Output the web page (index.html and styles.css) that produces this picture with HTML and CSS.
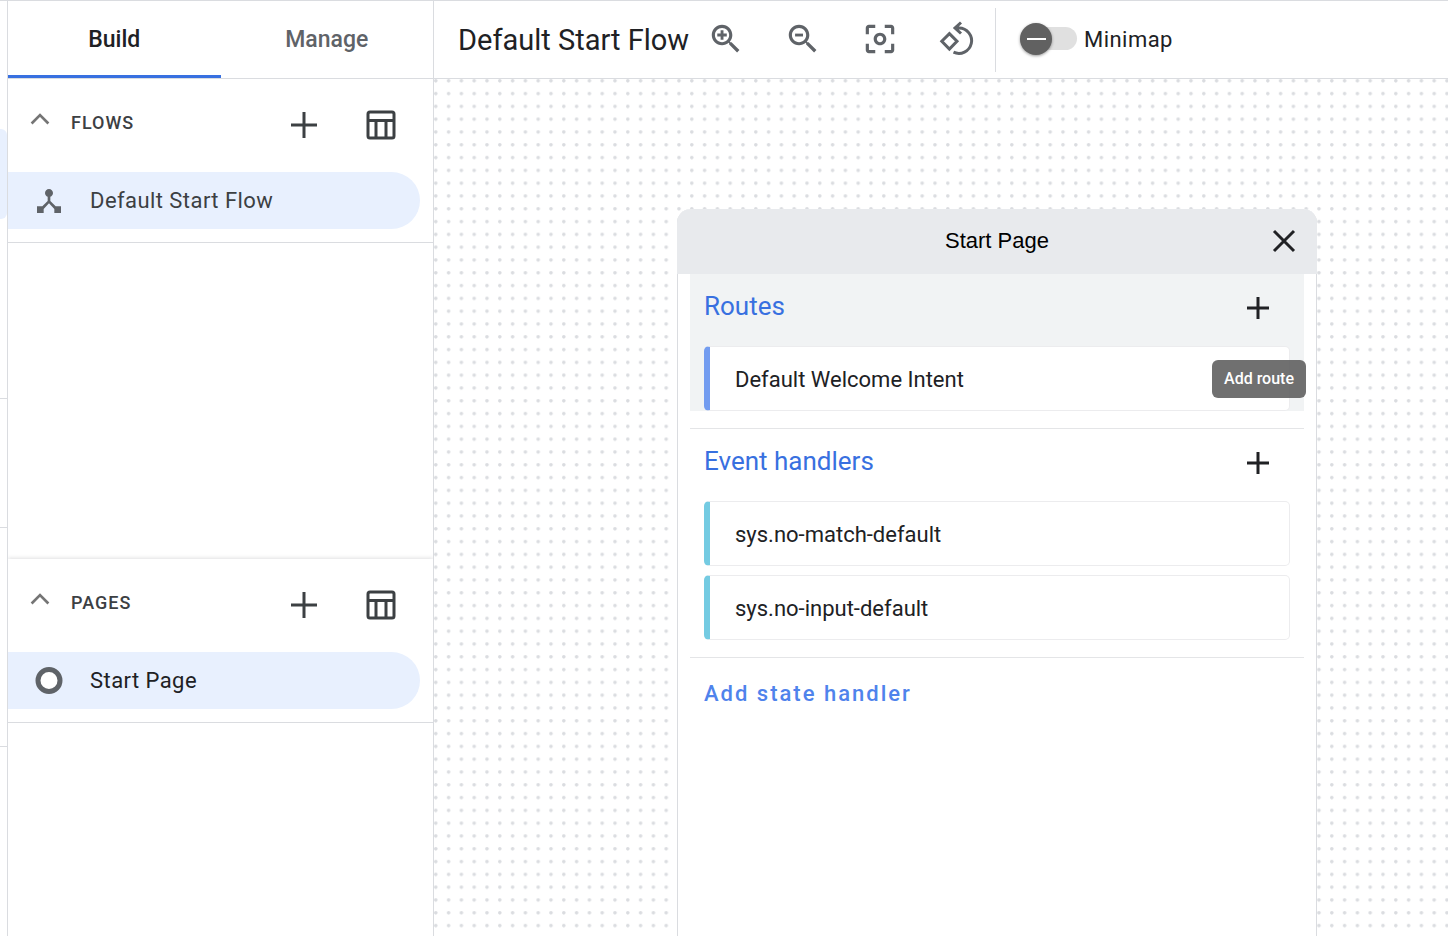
FILE: index.html
```html
<!DOCTYPE html>
<html lang="en">
<head>
  <meta charset="UTF-8">
  <meta name="viewport" content="width=device-width, initial-scale=1.0">
  <title>Default Start Flow</title>
  <link rel="stylesheet" href="styles.css">
</head>
<body>
  <div class="app">
    <div class="rail">
      <div class="rail-active"></div>
      <div class="rail-group rail-group-first"></div>
      <div class="rail-group rail-group-second"></div>
      <div class="rail-group rail-group-third"></div>
    </div>

    <aside class="sidebar">
      <nav class="tabs">
        <button class="tab active">Build</button>
        <button class="tab">Manage</button>
      </nav>

      <section class="pane flows">
        <div class="pane-header">
          <button class="icon-button chevron" aria-label="Collapse flows">
            <svg width="32" height="32" viewBox="0 0 24 24"><path d="M5.7 14.6L12 8.3l6.3 6.3" /></svg>
          </button>
          <h2>FLOWS</h2>
          <button class="icon-button add" aria-label="Create flow">
            <svg width="26" height="26" viewBox="0 0 26 26"><path d="M13 0v26M0 13h26" /></svg>
          </button>
          <button class="icon-button grid" aria-label="Flows table">
            <svg width="30" height="30" viewBox="0 0 30 30"><rect x="2" y="2" width="26" height="26" rx="2" /><path d="M2 10.500h26M10 10v18M20 10v18" /></svg>
          </button>
        </div>
        <a class="pane-item" href="#">
          <svg width="32" height="32" viewBox="0 0 24 24"><path d="M17 16l-4-4V8.82C14.16 8.4 15 7.3 15 6c0-1.66-1.34-3-3-3S9 4.34 9 6c0 1.3.84 2.4 2 2.82V12l-4 4H3v5h5v-3.05l4-4.2 4 4.2V21h5v-5h-4z" /></svg>
          <span>Default Start Flow</span>
        </a>
      </section>

      <section class="pane pages">
        <div class="pane-header">
          <button class="icon-button chevron" aria-label="Collapse pages">
            <svg width="32" height="32" viewBox="0 0 24 24"><path d="M5.7 14.6L12 8.3l6.3 6.3" /></svg>
          </button>
          <h2>PAGES</h2>
          <button class="icon-button add" aria-label="Create page">
            <svg width="26" height="26" viewBox="0 0 26 26"><path d="M13 0v26M0 13h26" /></svg>
          </button>
          <button class="icon-button grid" aria-label="Pages table">
            <svg width="30" height="30" viewBox="0 0 30 30"><rect x="2" y="2" width="26" height="26" rx="2" /><path d="M2 10.500h26M10 10v18M20 10v18" /></svg>
          </button>
        </div>
        <a class="pane-item current" href="#">
          <svg width="32" height="32" viewBox="0 0 32 32"><circle cx="16" cy="15.500" r="11" fill="#fff" stroke="#5f6368" stroke-width="5" /></svg>
          <span>Start Page</span>
        </a>
      </section>
    </aside>

    <main class="main">
      <header class="toolbar">
        <h1>Default Start Flow</h1>
        <div class="tools">
          <button class="icon-button" aria-label="Zoom in">
            <svg width="38" height="38" viewBox="0 0 24 24"><path d="M15.5 14h-.79l-.28-.27C15.41 12.59 16 11.11 16 9.5 16 5.91 13.09 3 9.5 3S3 5.91 3 9.5 5.91 16 9.5 16c1.61 0 3.09-.59 4.23-1.57l.27.28v.79l5 4.99L20.49 19l-4.99-5zm-6 0C7.01 14 5 11.99 5 9.5S7.01 5 9.5 5 14 7.01 14 9.5 11.99 14 9.5 14z" /><path d="M12.500 10.400h-2.100v2.100H8.600v-2.100H6.500V8.600h2.100V6.500h1.800v2.100h2.100z" /></svg>
          </button>
          <button class="icon-button" aria-label="Zoom out">
            <svg width="38" height="38" viewBox="0 0 24 24"><path d="M15.5 14h-.79l-.28-.27C15.41 12.59 16 11.11 16 9.5 16 5.91 13.09 3 9.5 3S3 5.91 3 9.5 5.91 16 9.5 16c1.61 0 3.09-.59 4.23-1.57l.27.28v.79l5 4.99L20.49 19l-4.99-5zm-6 0C7.01 14 5 11.99 5 9.5S7.01 5 9.5 5 14 7.01 14 9.5 11.99 14 9.5 14z" /><path d="M7 8.600h5v1.800H7z" /></svg>
          </button>
          <button class="icon-button" aria-label="Center view">
            <svg width="38" height="38" viewBox="0 0 24 24"><path d="M5 15H3v4c0 1.100.9 2 2 2h4v-2H5v-4zM5 5h4V3H5c-1.100 0-2 .9-2 2v4h2V5zm14-2h-4v2h4v4h2V5c0-1.100-.9-2-2-2zm0 16h-4v2h4c1.100 0 2-.9 2-2v-4h-2v4zM12 8c-2.210 0-4 1.790-4 4s1.790 4 4 4 4-1.790 4-4-1.790-4-4-4zm0 6c-1.100 0-2-.9-2-2s.9-2 2-2 2 .9 2 2-.9 2-2 2z" /></svg>
          </button>
          <button class="icon-button outlined" aria-label="Reset layout">
            <svg width="38" height="38" viewBox="0 0 38 38"><path d="M11.400 13.600l7.600 7.700-7.600 7.700-7.600-7.700zM23 2.500L17 8l6 5.500M17 8h4a12.700 12.700 0 1 1-5.500 24.200" /></svg>
          </button>
        </div>
        <label class="minimap">
          <input type="checkbox" role="switch">
          <span>Minimap</span>
        </label>
      </header>

      <div class="canvas">
        <article class="card">
          <header class="card-header">
            <h2>Start Page</h2>
            <button class="icon-button close" aria-label="Close">
              <svg width="24" height="24" viewBox="0 0 24 24"><path d="M2 2l20 20M22 2L2 22" /></svg>
            </button>
          </header>
          <div class="card-body">
            <section class="group hovered">
              <div class="group-header">
                <h3>Routes</h3>
                <button class="icon-button" aria-describedby="add-route-tip" aria-label="Add route">
                  <svg width="22" height="22" viewBox="0 0 22 22"><path d="M11 0v22M0 11h22" /></svg>
                </button>
                <span class="tooltip" id="add-route-tip" role="tooltip">Add route</span>
              </div>
              <ul class="handlers routes">
                <li>Default Welcome Intent</li>
              </ul>
            </section>
            <section class="group">
              <div class="group-header">
                <h3>Event handlers</h3>
                <button class="icon-button" aria-label="Add event handler">
                  <svg width="22" height="22" viewBox="0 0 22 22"><path d="M11 0v22M0 11h22" /></svg>
                </button>
              </div>
              <ul class="handlers events">
                <li>sys.no-match-default</li>
                <li>sys.no-input-default</li>
              </ul>
            </section>
            <button class="add-handler">Add state handler</button>
          </div>
        </article>
      </div>
    </main>
  </div>
</body>
</html>
```
FILE: styles.css
```css
* {
  box-sizing: border-box;
}

body {
  margin: 0;
  font-family: Roboto, Arial, sans-serif;
  color: #202124;
  background-color: #fff;
}

h1, h2, h3, ul {
  margin: 0;
  padding: 0;
}

button {
  padding: 0;
  border: none;
  background: none;
  font-family: inherit;
  cursor: pointer;
}

svg {
  display: block;
}

.app {
  display: flex;
  height: 100vh;
  border-top: 1px solid #dadce0;
  overflow: hidden;
}

/* edge of the collapsed project menu */
.rail {
  width: 8px;
  flex-shrink: 0;
  padding-top: 128px;
  border-right: 1px solid #dadce0;
}

.rail-active {
  height: 90px;
  background-color: #e8f0fe;
  border-radius: 0 6px 6px 0;
}

.rail-group {
  border-bottom: 1px solid #dadce0;
}

.rail-group-first {
  height: 180px;
}

.rail-group-second {
  height: 129px;
}

.rail-group-third {
  height: 219px;
}

/* sidebar */
.sidebar {
  display: flex;
  flex-direction: column;
  width: 426px;
  flex-shrink: 0;
  border-right: 1px solid #dadce0;
}

.tabs {
  display: flex;
  height: 78px;
  flex-shrink: 0;
  border-bottom: 1px solid #dadce0;
}

.tab {
  flex: 1;
  border-top: 3px solid transparent;
  border-bottom: 3px solid transparent;
  font-size: 23px;
  font-weight: 500;
  color: #5f6368;
}

.tab.active {
  color: #202124;
  border-bottom-color: #3870e0;
}

.flows {
  height: 480px;
  flex-shrink: 0;
}

.pages {
  flex: 1;
  box-shadow: 0 -1px 4px rgba(60, 64, 67, 0.16);
  clip-path: inset(-6px 0 0 0);
}

.pane-header {
  display: flex;
  align-items: center;
  height: 93px;
  padding: 0 37px 2px 16px;
}

.pane-header h2 {
  flex: 1;
  padding: 0 0 3px 15px;
  font-size: 18px;
  line-height: 24px;
  font-weight: 500;
  letter-spacing: 1px;
  color: #3c4043;
}

.icon-button svg {
  fill: #5f6368;
}

.chevron {
  margin-bottom: 10px;
}

.chevron svg {
  fill: none;
  stroke: #757575;
  stroke-width: 2;
}

.add {
  margin-right: 49px;
}

.add svg,
.grid svg {
  fill: none;
  stroke: #3c4043;
  stroke-width: 3;
}

.pane-item {
  display: flex;
  align-items: center;
  gap: 25px;
  height: 57px;
  margin-right: 13px;
  padding-left: 25px;
  border-radius: 0 29px 29px 0;
  background-color: #e8f0fe;
  font-size: 22px;
  letter-spacing: 0.02em;
  color: #3c4043;
  text-decoration: none;
}

.pane-item svg {
  fill: #5f6368;
}

.pane-item.current {
  color: #202124;
}

.pane::after {
  content: "";
  display: block;
  margin-top: 13px;
  border-bottom: 1px solid #dadce0;
}

/* toolbar */
.main {
  display: flex;
  flex-direction: column;
  flex: 1;
  min-width: 0;
}

.toolbar {
  display: flex;
  align-items: center;
  height: 78px;
  flex-shrink: 0;
  padding-left: 24px;
  border-bottom: 1px solid #dadce0;
}

.toolbar h1 {
  font-size: 29px;
  font-weight: 400;
  white-space: nowrap;
}

.tools {
  display: flex;
  gap: 39px;
  padding: 0 19px 2px 18px;
}

.outlined svg {
  fill: none;
  stroke: #5f6368;
  stroke-width: 3;
}

.minimap {
  display: flex;
  align-items: center;
  gap: 7px;
  height: 64px;
  padding-left: 24px;
  border-left: 1px solid #dadce0;
  font-size: 22px;
  letter-spacing: 0.02em;
}

.minimap input {
  display: flex;
  align-items: center;
  appearance: none;
  width: 57px;
  height: 23px;
  margin: 0 0 2px;
  border-radius: 12px;
  background-color: #e0e0e0;
}

.minimap input::before {
  content: "";
  width: 32px;
  height: 32px;
  flex-shrink: 0;
  border-radius: 50%;
  background: linear-gradient(#fff, #fff) center / 19px 2px no-repeat #616161;
  box-shadow: 0 1px 3px rgba(0, 0, 0, 0.4);
}

/* canvas */
.canvas {
  display: flex;
  flex: 1;
  padding: 130px 0 0 243px;
  background: url("data:image/svg+xml,%3Csvg xmlns='http://www.w3.org/2000/svg' width='64' height='64' viewBox='0 0 320 320'%3E%3Cdefs%3E%3Cpattern id='d' width='64' height='64' patternUnits='userSpaceOnUse'%3E%3Ccircle cx='9' cy='9' r='9' fill='%23dadce0'/%3E%3C/pattern%3E%3C/defs%3E%3Crect width='320' height='320' fill='url(%23d)'/%3E%3C/svg%3E");
}

.card {
  width: 640px;
  flex-shrink: 0;
  border: 1px solid #dadce0;
  border-top: none;
  border-bottom: none;
  border-radius: 14px 14px 0 0;
  background-color: #fff;
}

.card-header {
  display: grid;
  grid-template-columns: 24px 1fr 24px;
  align-items: center;
  height: 65px;
  margin: 0 -1px;
  padding: 0 21px 2px;
  border-radius: 14px 14px 0 0;
  background-color: #e8eaed;
}

.card-header h2 {
  grid-column: 2;
  text-align: center;
  font-family: "Liberation Sans", Arial, sans-serif;
  font-size: 22px;
  font-weight: 400;
  color: #000;
}

.close svg {
  stroke: #202124;
  stroke-width: 3;
}

.card-body {
  padding: 0 12px;
}

.group {
  border-bottom: 1px solid #e4e5e7;
}

.group-header {
  position: relative;
  display: flex;
  align-items: center;
  justify-content: space-between;
  height: 72px;
  padding: 0 35px 8px 14px;
}

.group-header h3 {
  font-size: 26px;
  font-weight: 400;
  color: #3870e0;
}

.group-header .icon-button {
  margin-top: 3px;
}

.group-header svg {
  stroke: #202124;
  stroke-width: 3;
}

.handlers {
  display: flex;
  flex-direction: column;
  gap: 9px;
  padding: 0 14px;
  margin-bottom: 17px;
  list-style-type: none;
}

.handlers li {
  display: flex;
  align-items: center;
  height: 65px;
  padding: 2px 0 0 25px;
  border: 1px solid #ececee;
  border-left: 6px solid #74cbe2;
  border-radius: 5px;
  background-color: #fff;
  font-size: 22px;
}

.hovered .group-header,
.hovered .handlers {
  background-color: #f1f3f4;
}

.handlers.routes li {
  border-left-color: #739cf0;
}

.tooltip {
  position: absolute;
  top: 86px;
  right: -2px;
  padding: 0 12px;
  border-radius: 6px;
  background-color: rgba(97, 97, 97, 0.9);
  font-size: 16px;
  font-weight: 500;
  line-height: 38px;
  color: #fff;
}

.add-handler {
  margin: 22px 14px;
  font-size: 22px;
  font-weight: 500;
  line-height: 28px;
  letter-spacing: 2px;
  color: #4f83ec;
}
```
